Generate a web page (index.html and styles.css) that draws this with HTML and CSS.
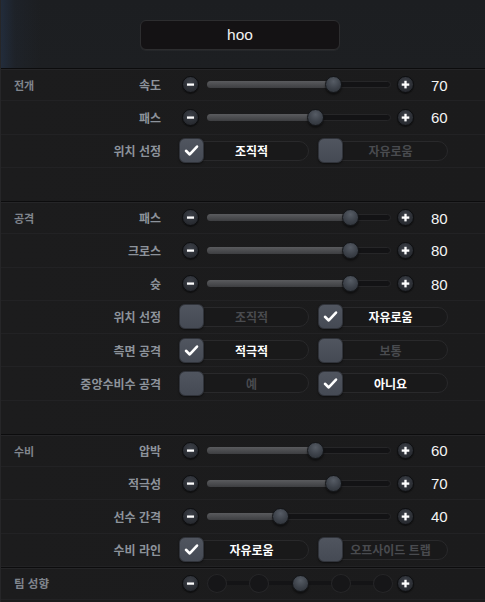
FILE: index.html
```html
<!DOCTYPE html>
<html lang="ko">
<head>
<meta charset="utf-8">
<link rel="stylesheet" href="styles.css">
</head>
<body>
<div class="panel">
  <div class="header">
    <div class="namebox">hoo</div>
  </div>

  <div class="section">
    <div class="row">
      <div class="cat">전개</div><div class="label">속도</div>
      <span class="btn minus"><svg viewBox="0 0 17 17"><rect x="4.5" y="7.3" width="8" height="2.6" fill="#fff"/></svg></span>
      <div class="track"><div class="fill" style="--v:70"></div><div class="thumb" style="--v:70"></div></div>
      <span class="btn plus"><svg viewBox="0 0 17 17"><rect x="4.2" y="7.3" width="8.6" height="2.6" fill="#fff"/><rect x="7.2" y="4.3" width="2.6" height="8.6" fill="#fff"/></svg></span>
      <div class="value">70</div>
    </div>
    <div class="row">
      <div class="cat"></div><div class="label">패스</div>
      <span class="btn minus"><svg viewBox="0 0 17 17"><rect x="4.5" y="7.3" width="8" height="2.6" fill="#fff"/></svg></span>
      <div class="track"><div class="fill" style="--v:60"></div><div class="thumb" style="--v:60"></div></div>
      <span class="btn plus"><svg viewBox="0 0 17 17"><rect x="4.2" y="7.3" width="8.6" height="2.6" fill="#fff"/><rect x="7.2" y="4.3" width="2.6" height="8.6" fill="#fff"/></svg></span>
      <div class="value">60</div>
    </div>
    <div class="row">
      <div class="cat"></div><div class="label">위치 선정</div>
      <div class="opt on"><span class="box"><svg viewBox="0 0 25 25"><polyline points="6.5,12.8 10.6,16.8 18.5,8.2" fill="none" stroke="#fff" stroke-width="2.8" stroke-linecap="round" stroke-linejoin="round"/></svg></span><span class="pill">조직적</span></div>
      <div class="opt"><span class="box"></span><span class="pill">자유로움</span></div>
    </div>
    <div class="row blank"></div>
  </div>

  <div class="section">
    <div class="row">
      <div class="cat">공격</div><div class="label">패스</div>
      <span class="btn minus"><svg viewBox="0 0 17 17"><rect x="4.5" y="7.3" width="8" height="2.6" fill="#fff"/></svg></span>
      <div class="track"><div class="fill" style="--v:80"></div><div class="thumb" style="--v:80"></div></div>
      <span class="btn plus"><svg viewBox="0 0 17 17"><rect x="4.2" y="7.3" width="8.6" height="2.6" fill="#fff"/><rect x="7.2" y="4.3" width="2.6" height="8.6" fill="#fff"/></svg></span>
      <div class="value">80</div>
    </div>
    <div class="row">
      <div class="cat"></div><div class="label">크로스</div>
      <span class="btn minus"><svg viewBox="0 0 17 17"><rect x="4.5" y="7.3" width="8" height="2.6" fill="#fff"/></svg></span>
      <div class="track"><div class="fill" style="--v:80"></div><div class="thumb" style="--v:80"></div></div>
      <span class="btn plus"><svg viewBox="0 0 17 17"><rect x="4.2" y="7.3" width="8.6" height="2.6" fill="#fff"/><rect x="7.2" y="4.3" width="2.6" height="8.6" fill="#fff"/></svg></span>
      <div class="value">80</div>
    </div>
    <div class="row">
      <div class="cat"></div><div class="label">슛</div>
      <span class="btn minus"><svg viewBox="0 0 17 17"><rect x="4.5" y="7.3" width="8" height="2.6" fill="#fff"/></svg></span>
      <div class="track"><div class="fill" style="--v:80"></div><div class="thumb" style="--v:80"></div></div>
      <span class="btn plus"><svg viewBox="0 0 17 17"><rect x="4.2" y="7.3" width="8.6" height="2.6" fill="#fff"/><rect x="7.2" y="4.3" width="2.6" height="8.6" fill="#fff"/></svg></span>
      <div class="value">80</div>
    </div>
    <div class="row">
      <div class="cat"></div><div class="label">위치 선정</div>
      <div class="opt"><span class="box"></span><span class="pill">조직적</span></div>
      <div class="opt on"><span class="box"><svg viewBox="0 0 25 25"><polyline points="6.5,12.8 10.6,16.8 18.5,8.2" fill="none" stroke="#fff" stroke-width="2.8" stroke-linecap="round" stroke-linejoin="round"/></svg></span><span class="pill">자유로움</span></div>
    </div>
    <div class="row">
      <div class="cat"></div><div class="label">측면 공격</div>
      <div class="opt on"><span class="box"><svg viewBox="0 0 25 25"><polyline points="6.5,12.8 10.6,16.8 18.5,8.2" fill="none" stroke="#fff" stroke-width="2.8" stroke-linecap="round" stroke-linejoin="round"/></svg></span><span class="pill">적극적</span></div>
      <div class="opt"><span class="box"></span><span class="pill">보통</span></div>
    </div>
    <div class="row">
      <div class="cat"></div><div class="label">중앙수비수 공격</div>
      <div class="opt"><span class="box"></span><span class="pill">예</span></div>
      <div class="opt on"><span class="box"><svg viewBox="0 0 25 25"><polyline points="6.5,12.8 10.6,16.8 18.5,8.2" fill="none" stroke="#fff" stroke-width="2.8" stroke-linecap="round" stroke-linejoin="round"/></svg></span><span class="pill">아니요</span></div>
    </div>
    <div class="row blank"></div>
  </div>

  <div class="section">
    <div class="row">
      <div class="cat">수비</div><div class="label">압박</div>
      <span class="btn minus"><svg viewBox="0 0 17 17"><rect x="4.5" y="7.3" width="8" height="2.6" fill="#fff"/></svg></span>
      <div class="track"><div class="fill" style="--v:60"></div><div class="thumb" style="--v:60"></div></div>
      <span class="btn plus"><svg viewBox="0 0 17 17"><rect x="4.2" y="7.3" width="8.6" height="2.6" fill="#fff"/><rect x="7.2" y="4.3" width="2.6" height="8.6" fill="#fff"/></svg></span>
      <div class="value">60</div>
    </div>
    <div class="row">
      <div class="cat"></div><div class="label">적극성</div>
      <span class="btn minus"><svg viewBox="0 0 17 17"><rect x="4.5" y="7.3" width="8" height="2.6" fill="#fff"/></svg></span>
      <div class="track"><div class="fill" style="--v:70"></div><div class="thumb" style="--v:70"></div></div>
      <span class="btn plus"><svg viewBox="0 0 17 17"><rect x="4.2" y="7.3" width="8.6" height="2.6" fill="#fff"/><rect x="7.2" y="4.3" width="2.6" height="8.6" fill="#fff"/></svg></span>
      <div class="value">70</div>
    </div>
    <div class="row">
      <div class="cat"></div><div class="label">선수 간격</div>
      <span class="btn minus"><svg viewBox="0 0 17 17"><rect x="4.5" y="7.3" width="8" height="2.6" fill="#fff"/></svg></span>
      <div class="track"><div class="fill" style="--v:40"></div><div class="thumb" style="--v:40"></div></div>
      <span class="btn plus"><svg viewBox="0 0 17 17"><rect x="4.2" y="7.3" width="8.6" height="2.6" fill="#fff"/><rect x="7.2" y="4.3" width="2.6" height="8.6" fill="#fff"/></svg></span>
      <div class="value">40</div>
    </div>
    <div class="row">
      <div class="cat"></div><div class="label">수비 라인</div>
      <div class="opt on"><span class="box"><svg viewBox="0 0 25 25"><polyline points="6.5,12.8 10.6,16.8 18.5,8.2" fill="none" stroke="#fff" stroke-width="2.8" stroke-linecap="round" stroke-linejoin="round"/></svg></span><span class="pill">자유로움</span></div>
      <div class="opt"><span class="box"></span><span class="pill">오프사이드 트랩</span></div>
    </div>
  </div>

  <div class="section">
    <div class="row">
      <div class="cat wide">팀 성향</div>
      <span class="btn minus"><svg viewBox="0 0 17 17"><rect x="4.5" y="7.3" width="8" height="2.6" fill="#fff"/></svg></span>
      <div class="steps">
        <span class="dot"></span><span class="dot"></span><span class="dot cur"></span><span class="dot"></span><span class="dot"></span>
      </div>
      <span class="btn plus"><svg viewBox="0 0 17 17"><rect x="4.2" y="7.3" width="8.6" height="2.6" fill="#fff"/><rect x="7.2" y="4.3" width="2.6" height="8.6" fill="#fff"/></svg></span>
    </div>
  </div>
</div>
</body>
</html>
```

FILE: styles.css
```css
* { box-sizing: border-box; }
html, body {
  margin: 0;
  padding: 0;
  background: #1b1b1c;
}
body {
  width: 485px;
  height: 602px;
  overflow: hidden;
  font-family: "Noto Sans CJK KR", "Noto Sans", sans-serif;
}
.panel {
  width: 485px;
  height: 602px;
  background: #1b1b1c;
  border-left: 1px solid #262628;
}
.header {
  height: 68px;
  display: flex;
  justify-content: center;
  padding-top: 20px;
  padding-right: 6px;
  background:
    linear-gradient(to right, rgba(40,60,90,0.45) 0, rgba(40,60,90,0.12) 14px, rgba(0,0,0,0) 40px),
    linear-gradient(#1c1e21, #1d1f22);
}
.namebox {
  width: 200px;
  height: 30px;
  border-radius: 6px;
  background: #141214;
  border: 1px solid #2d2d2f;
  box-shadow: 0 1px 0 rgba(255,255,255,0.04);
  color: #f2f2f2;
  font-family: "Liberation Sans", Arial, sans-serif;
  font-size: 15.5px;
  display: flex;
  align-items: center;
  justify-content: center;
  padding-bottom: 1px;
}
.section {
  border-top: 1px solid #0c0c0d;
  box-shadow: inset 0 1px 0 #252527;
  background: linear-gradient(to right, #1c1c1d, #1b1b1c);
}
.row {
  height: 33.25px;
  display: flex;
  align-items: center;
  border-bottom: 1px solid #222224;
}
.section .row:first-child { height: 32.25px; }
.row.blank { border-bottom: none; }
.cat {
  width: 60px;
  padding-left: 13px;
  color: #80858d;
  font-size: 11px;
  font-weight: 700;
  align-self: flex-start;
  padding-top: 8px;
}
.cat.wide {
  width: 160px;
  font-size: 11.5px;
  align-self: center;
  padding-top: 0;
}
.label {
  width: 100px;
  text-align: right;
  color: #8d939b;
  font-size: 12px;
  font-weight: 700;
}
.btn {
  width: 17px;
  height: 17px;
  border-radius: 50%;
  background: radial-gradient(circle at 50% 35%, #3c4048 0, #2b2e34 60%, #202226 100%);
  border: 1px solid #0d0e10;
  box-shadow: 0 1px 1px rgba(0,0,0,0.5);
  display: flex;
  flex-shrink: 0;
}
.btn svg { width: 100%; height: 100%; }
.btn.minus { margin-left: 21px; }
.btn.plus { margin-left: 6px; }
.track {
  position: relative;
  margin-left: 8px;
  width: 184px;
  height: 7px;
  border-radius: 4px;
  background: #131315;
  border: 1px solid #262628;
}
.fill {
  width: calc(var(--v) * 1.767px + 2px);
  border-radius: 4px 0 0 4px;
  background: linear-gradient(#5a5b5e, #3d3e41);
  margin: -1px 0 0 -1px;
  height: 7px;
}
.thumb {
  position: absolute;
  top: -6px;
  left: calc(var(--v) * 1.767px - 7px);
  width: 17px;
  height: 17px;
  border-radius: 50%;
  background: radial-gradient(circle at 50% 30%, #565c65 0, #3c4149 55%, #2b2f35 100%);
  border: 1px solid #141619;
  box-shadow: 0 2px 2px rgba(0,0,0,0.45);
}
.value {
  margin-left: 17px;
  color: #f4f4f4;
  font-family: "Liberation Sans", Arial, sans-serif;
  font-size: 15px;
  padding-top: 1px;
}
.opt {
  display: flex;
  align-items: center;
  width: 130px;
  height: 25px;
  margin-left: 9px;
}
.label + .opt { margin-left: 18px; }
.box {
  position: relative;
  z-index: 1;
  width: 25px;
  height: 25px;
  flex-shrink: 0;
  border-radius: 6px;
  background: linear-gradient(#50555f, #454a54);
  border: 1px solid #30333a;
  box-shadow: 0 1px 2px rgba(0,0,0,0.5);
  display: flex;
}
.box svg { width: 100%; height: 100%; }
.pill {
  flex: 1;
  height: 20px;
  margin-left: -12px;
  padding-left: 12px;
  padding-right: 10px;
  border: 1px solid #29292b;
  border-radius: 10px;
  background: #19191a;
  display: flex;
  align-items: center;
  justify-content: center;
  font-size: 12px;
  font-weight: 700;
  color: #494b4f;
}
.opt.on .pill { color: #ffffff; }
.steps {
  margin-left: 8px;
  width: 186px;
  display: flex;
  justify-content: space-between;
  align-items: center;
  background: linear-gradient(#141416, #141416) center / 100% 4px no-repeat;
}
.dot {
  width: 20px;
  height: 19px;
  border-radius: 50%;
  background: #161618;
  border: 1px solid #262628;
}
.dot.cur {
  width: 17px;
  height: 17px;
  margin: 0 1px;
  background: radial-gradient(circle at 50% 30%, #565c65 0, #3c4149 55%, #2b2f35 100%);
  border: 1px solid #141619;
  box-shadow: 0 2px 2px rgba(0,0,0,0.45);
}
.steps + .btn.plus { margin-left: 4px; }
```
